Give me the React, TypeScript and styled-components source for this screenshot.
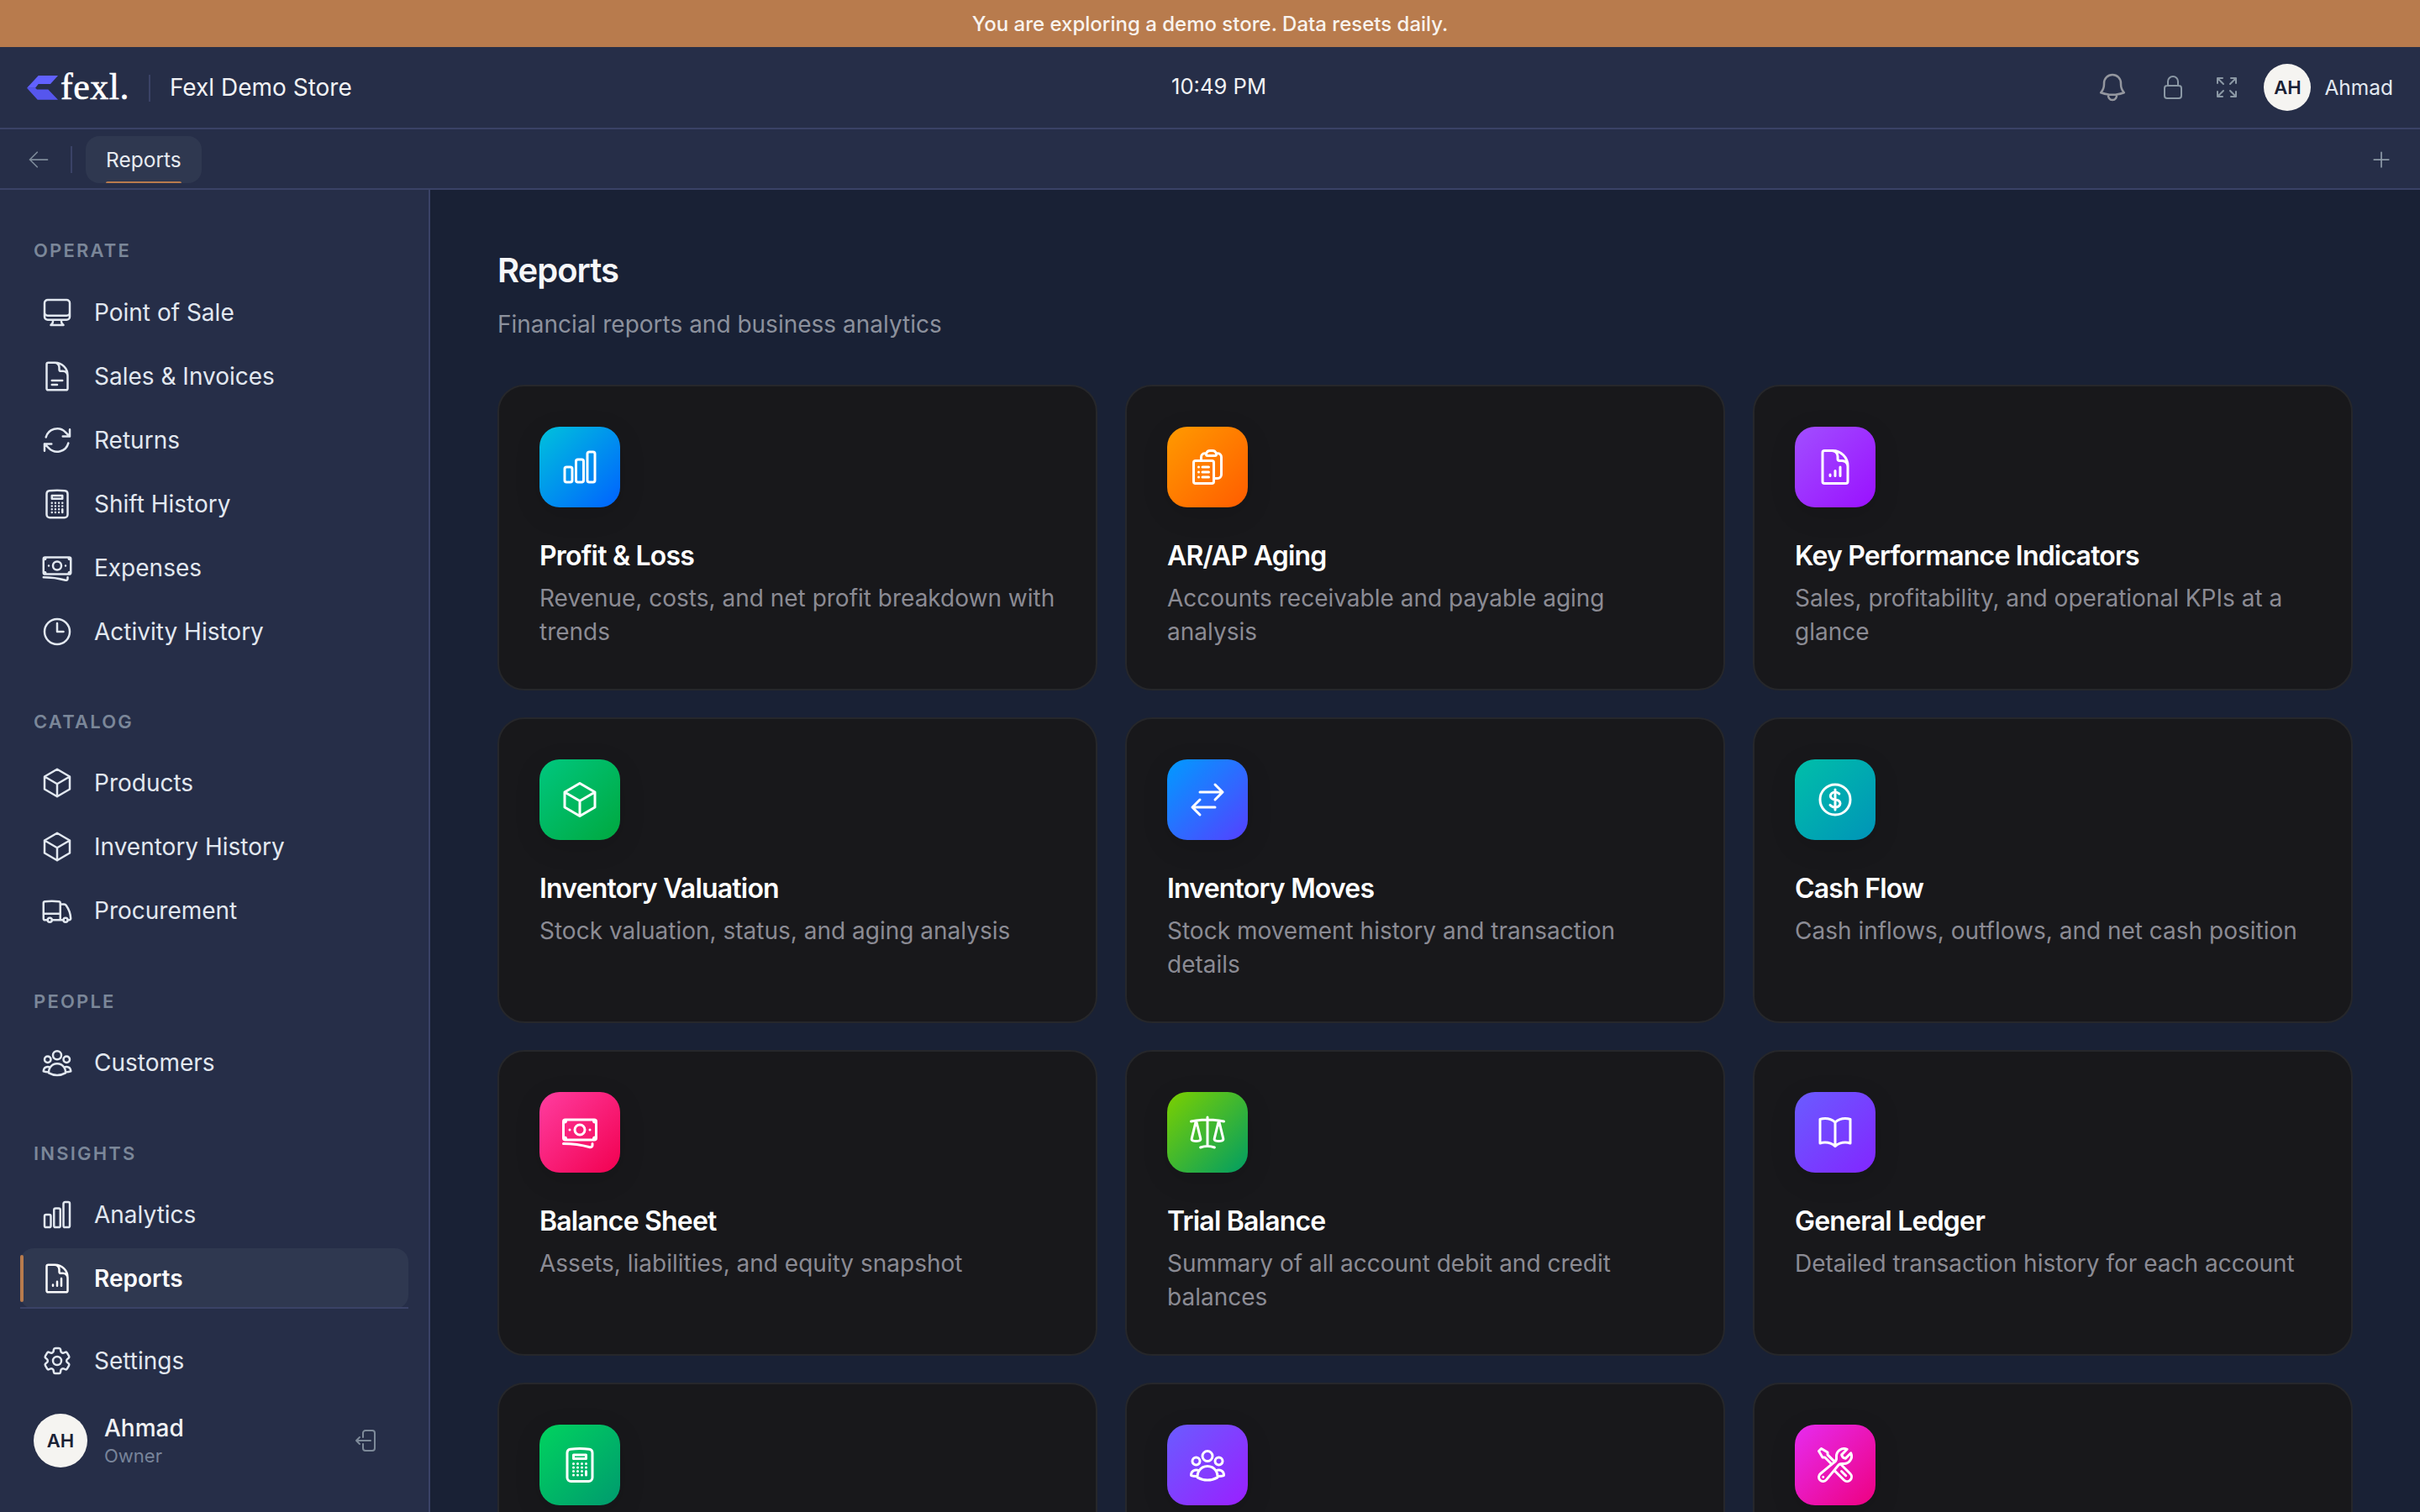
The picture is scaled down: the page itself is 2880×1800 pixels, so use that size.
import React from "react";
import styled, { createGlobalStyle } from "styled-components";
import {
  HiOutlineArrowLeft,
  HiOutlineArrowPath,
  HiOutlineArrowsPointingOut,
  HiOutlineArrowsRightLeft,
  HiOutlineBanknotes,
  HiOutlineBell,
  HiOutlineBookOpen,
  HiOutlineCalculator,
  HiOutlineChartBar,
  HiOutlineClipboardDocumentList,
  HiOutlineClock,
  HiOutlineCog6Tooth,
  HiOutlineComputerDesktop,
  HiOutlineCube,
  HiOutlineCurrencyDollar,
  HiOutlineDocumentChartBar,
  HiOutlineDocumentText,
  HiOutlineLockClosed,
  HiOutlinePlus,
  HiOutlineScale,
  HiOutlineTruck,
  HiOutlineUserGroup,
  HiOutlineWrenchScrewdriver,
} from "react-icons/hi2";

const Global = createGlobalStyle`
  * { box-sizing: border-box; }
  html, body { margin: 0; padding: 0; height: 100%; background: #192135; }
  body { font-family: Inter, "Liberation Sans", sans-serif; overflow: hidden; }
  #root { height: 100%; }
`;

const Page = styled.div`
  display: flex;
  flex-direction: column;
  width: 2880px;
  height: 1800px;
  overflow: hidden;
`;

const Banner = styled.div`
  height: 56px;
  flex: none;
  display: flex;
  align-items: center;
  justify-content: center;
  background: #b87b4d;
  color: #f8f3ee;
  font-size: 24px;
  font-weight: 500;
`;

const Header = styled.header`
  position: relative;
  height: 98px;
  flex: none;
  display: flex;
  align-items: center;
  padding: 0 32px;
  background: #262e48;
  border-bottom: 2px solid #3a4266;
`;

const Logo = styled.div`
  display: flex;
  align-items: center;
  gap: 3px;
`;

const LogoText = styled.span`
  font-family: "Liberation Serif", serif;
  font-size: 44px;
  line-height: 44px;
  font-weight: 400;
  color: #fff;
  letter-spacing: 0.5px;
  -webkit-text-stroke: 0.6px #fff;
`;

const HeaderDivider = styled.div`
  width: 2px;
  height: 32px;
  margin: 2px 23px 0 23px;
  background: #3a4266;
`;

const StoreName = styled.div`
  color: #f1f2f4;
  font-size: 28px;
  font-weight: 400;
`;

const Clock = styled.div`
  position: absolute;
  left: 1394px;
  top: 31px;
  color: #f1f2f4;
  font-size: 25.6px;
`;

const HeaderRight = styled.div`
  margin-left: auto;
  display: flex;
  align-items: center;
`;

const BellButton = styled.span`
  display: flex;
  color: #94979f;
  margin-right: 36px;
`;

const LockButton = styled.span`
  display: flex;
  color: #8b98a5;
  margin-right: 32px;
`;

const ExpandButton = styled.span`
  display: flex;
  color: #8b98a5;
  margin-right: 28px;
`;

const Avatar = styled.div<{ $size: number }>`
  width: ${(p) => p.$size}px;
  height: ${(p) => p.$size}px;
  flex: none;
  border-radius: 50%;
  display: flex;
  align-items: center;
  justify-content: center;
  background: #f5f4f1;
  color: #1a2135;
  font-size: 22px;
  font-weight: 600;
`;

const HeaderUser = styled.div`
  margin-left: 16px;
  color: #e2e8f0;
  font-size: 24.5px;
`;

const TabBar = styled.div`
  height: 72px;
  flex: none;
  display: flex;
  align-items: center;
  padding: 2px 32px 0;
  background: #262e48;
  border-bottom: 2px solid #3a4266;
`;

const BackButton = styled.span`
  display: flex;
  color: #7d8a99;
`;

const TabDivider = styled.div`
  width: 2px;
  height: 32px;
  margin: 0 16px 0 24px;
  background: #3a4266;
`;

const Tab = styled.div`
  position: relative;
  height: 56px;
  padding: 0 24px;
  display: flex;
  align-items: center;
  border-radius: 16px;
  background: #2f3850;
  color: #e8ebf0;
  font-size: 24.5px;

  &::after {
    content: "";
    position: absolute;
    left: 24px;
    right: 24px;
    bottom: 0;
    height: 2px;
    border-radius: 2px 2px 0 0;
    background: #b87b4d;
  }
`;

const PlusButton = styled.span`
  margin-left: auto;
  display: flex;
  color: #8b98a5;
`;

const Body = styled.div`
  flex: 1;
  min-height: 0;
  display: flex;
`;

const Sidebar = styled.aside`
  width: 512px;
  flex: none;
  display: flex;
  flex-direction: column;
  padding: 0 24px;
  background: #262e48;
  border-right: 2px solid #3a4266;
`;

const Nav = styled.nav`
  flex: 1;
  min-height: 0;
  overflow: hidden;
`;

const GroupLabel = styled.div`
  height: 32px;
  margin-bottom: 17px;
  padding-left: 16px;
  line-height: 32px;
  color: #7b8799;
  font-size: 22px;
  font-weight: 600;
  letter-spacing: 2.2px;
`;

const NavGroup = styled.div`
  padding-top: 56px;
  display: flex;
  flex-direction: column;
  gap: 4px;

  &:first-child {
    margin-bottom: -1px;
  }

  &:first-child ${GroupLabel} {
    margin-bottom: 18px;
  }
`;

const NavItem = styled.div<{ $active?: boolean }>`
  position: relative;
  height: 72px;
  flex: none;
  display: flex;
  align-items: center;
  gap: 24px;
  padding: 0 24px;
  border-radius: 16px;
  color: ${(p) => (p.$active ? "#fbfbfc" : "#e2e8f0")};
  background: ${(p) => (p.$active ? "#2f3850" : "transparent")};
  font-size: 28px;
  font-weight: ${(p) => (p.$active ? 600 : 400)};

  ${(p) =>
    p.$active &&
    `&::before {
      content: "";
      position: absolute;
      left: 0;
      top: 8px;
      bottom: 8px;
      width: 4px;
      border-radius: 2px;
      background: #b87b4d;
    }`}
`;

const SidebarFooter = styled.div`
  flex: none;
  border-top: 2px solid #3a4266;
  padding: 26px 0 52px;
`;

const UserRow = styled.div`
  margin-top: 26px;
  padding-left: 16px;
  display: flex;
  align-items: center;
  gap: 20px;
`;

const UserText = styled.div`
  flex: 1;
  display: flex;
  flex-direction: column;
`;

const UserName = styled.div`
  color: #f1f2f4;
  font-size: 28px;
  line-height: 36px;
  font-weight: 500;
`;

const UserRole = styled.div`
  color: #78849a;
  font-size: 22px;
  line-height: 30px;
`;

const LogoutButton = styled.span`
  display: flex;
  color: #7d8a99;
  margin-right: 33px;
`;

const Main = styled.main`
  flex: 1;
  min-width: 0;
  overflow: hidden;
  padding: 68px 80px 0;
  background: #192135;
`;

const Title = styled.h1`
  margin: 0;
  color: #f6f7f9;
  font-size: 40px;
  line-height: 56px;
  font-weight: 600;
  letter-spacing: -1px;
`;

const Subtitle = styled.p`
  margin: 16px 0 0;
  color: #8c919d;
  font-size: 28px;
  line-height: 40px;
`;

const Grid = styled.div`
  margin-top: 52px;
  display: grid;
  grid-template-columns: repeat(3, 1fr);
  grid-auto-rows: 364px;
  gap: 32px 33px;
`;

const Card = styled.div`
  padding: 48px;
  border: 2px solid #26272b;
  border-radius: 32px;
  background: #18181b;
`;

const IconTile = styled.div<{ $from: string; $to: string }>`
  width: 96px;
  height: 96px;
  display: flex;
  align-items: center;
  justify-content: center;
  border-radius: 24px;
  color: #fff;
  background: linear-gradient(135deg, ${(p) => p.$from}, ${(p) => p.$to});
  box-shadow: 0 8px 32px rgba(0, 0, 0, 0.12);
`;

const CardTitle = styled.h2`
  margin: 36px 0 8px;
  color: #fff;
  font-size: 32px;
  line-height: 44px;
  font-weight: 600;
  letter-spacing: -0.8px;
`;

const CardText = styled.p`
  margin: 0;
  color: #8b8b94;
  font-size: 28px;
  line-height: 40px;
`;

type Ic = React.ComponentType<{ size?: number }>;

const groups: { label: string; items: { icon: Ic; text: string; active?: boolean }[] }[] = [
  {
    label: "OPERATE",
    items: [
      { icon: HiOutlineComputerDesktop, text: "Point of Sale" },
      { icon: HiOutlineDocumentText, text: "Sales & Invoices" },
      { icon: HiOutlineArrowPath, text: "Returns" },
      { icon: HiOutlineCalculator, text: "Shift History" },
      { icon: HiOutlineBanknotes, text: "Expenses" },
      { icon: HiOutlineClock, text: "Activity History" },
    ],
  },
  {
    label: "CATALOG",
    items: [
      { icon: HiOutlineCube, text: "Products" },
      { icon: HiOutlineCube, text: "Inventory History" },
      { icon: HiOutlineTruck, text: "Procurement" },
    ],
  },
  { label: "PEOPLE", items: [{ icon: HiOutlineUserGroup, text: "Customers" }] },
  {
    label: "INSIGHTS",
    items: [
      { icon: HiOutlineChartBar, text: "Analytics" },
      { icon: HiOutlineDocumentChartBar, text: "Reports", active: true },
    ],
  },
];

const cards: { icon: Ic; from: string; to: string; title?: string; text?: string }[] = [
  { icon: HiOutlineChartBar, from: "#00c2dc", to: "#0062ff", title: "Profit & Loss", text: "Revenue, costs, and net profit breakdown with trends" },
  { icon: HiOutlineClipboardDocumentList, from: "#ff9a00", to: "#ff5c00", title: "AR/AP Aging", text: "Accounts receivable and payable aging analysis" },
  { icon: HiOutlineDocumentChartBar, from: "#a14fff", to: "#9a10ff", title: "Key Performance Indicators", text: "Sales, profitability, and operational KPIs at a glance" },
  { icon: HiOutlineCube, from: "#00c77f", to: "#00a83f", title: "Inventory Valuation", text: "Stock valuation, status, and aging analysis" },
  { icon: HiOutlineArrowsRightLeft, from: "#009bff", to: "#5540ff", title: "Inventory Moves", text: "Stock movement history and transaction details" },
  { icon: HiOutlineCurrencyDollar, from: "#00bfa9", to: "#0094b8", title: "Cash Flow", text: "Cash inflows, outflows, and net cash position" },
  { icon: HiOutlineBanknotes, from: "#ff3da0", to: "#f20050", title: "Balance Sheet", text: "Assets, liabilities, and equity snapshot" },
  { icon: HiOutlineScale, from: "#7cd000", to: "#009d63", title: "Trial Balance", text: "Summary of all account debit and credit balances" },
  { icon: HiOutlineBookOpen, from: "#6a5cff", to: "#8226ff", title: "General Ledger", text: "Detailed transaction history for each account" },
  { icon: HiOutlineCalculator, from: "#00d35f", to: "#009a6e" },
  { icon: HiOutlineUserGroup, from: "#6a5cff", to: "#9a1fff" },
  { icon: HiOutlineWrenchScrewdriver, from: "#e62cf0", to: "#ee0080" },
];

const LogoMark = () => (
  <svg width="37" height="29" viewBox="0 0 37 29">
    <path d="M13.7 0H37L28 10H13.7L10 14.7H0Z" fill="#6161ff" />
    <path d="M0 14.7H10L12 16.5H25.3L37 28.7H12.7Z" fill="#5656ee" />
  </svg>
);

const LogoutIcon = () => (
  <svg width="32" height="32" viewBox="0 0 24 24" fill="none" stroke="currentColor" strokeWidth="1.5" strokeLinecap="round" strokeLinejoin="round">
    <path d="M8.25 9V5.25A2.25 2.25 0 0 1 10.5 3h6a2.25 2.25 0 0 1 2.25 2.25v13.5A2.25 2.25 0 0 1 16.5 21h-6a2.25 2.25 0 0 1-2.25-2.25V15m-3 0-3-3m0 0 3-3m-3 3H15" />
  </svg>
);

export default function App() {
  return (
    <Page>
      <Global />
      <Banner>You are exploring a demo store. Data resets daily.</Banner>
      <Header>
        <Logo>
          <LogoMark />
          <LogoText>fexl.</LogoText>
        </Logo>
        <HeaderDivider />
        <StoreName>Fexl Demo Store</StoreName>
        <Clock>10:49 PM</Clock>
        <HeaderRight>
          <BellButton><HiOutlineBell size={40} /></BellButton>
          <LockButton><HiOutlineLockClosed size={32} /></LockButton>
          <ExpandButton><HiOutlineArrowsPointingOut size={32} /></ExpandButton>
          <Avatar $size={56}>AH</Avatar>
          <HeaderUser>Ahmad</HeaderUser>
        </HeaderRight>
      </Header>
      <TabBar>
        <BackButton><HiOutlineArrowLeft size={28} /></BackButton>
        <TabDivider />
        <Tab>Reports</Tab>
        <PlusButton><HiOutlinePlus size={28} /></PlusButton>
      </TabBar>
      <Body>
        <Sidebar>
          <Nav>
            {groups.map((g) => (
              <NavGroup key={g.label}>
                <GroupLabel>{g.label}</GroupLabel>
                {g.items.map((it) => (
                  <NavItem key={it.text} $active={it.active}>
                    <it.icon size={40} />
                    {it.text}
                  </NavItem>
                ))}
              </NavGroup>
            ))}
          </Nav>
          <SidebarFooter>
            <NavItem>
              <HiOutlineCog6Tooth size={40} />
              Settings
            </NavItem>
            <UserRow>
              <Avatar $size={64}>AH</Avatar>
              <UserText>
                <UserName>Ahmad</UserName>
                <UserRole>Owner</UserRole>
              </UserText>
              <LogoutButton><LogoutIcon /></LogoutButton>
            </UserRow>
          </SidebarFooter>
        </Sidebar>
        <Main>
          <Title>Reports</Title>
          <Subtitle>Financial reports and business analytics</Subtitle>
          <Grid>
            {cards.map((c, i) => (
              <Card key={i}>
                <IconTile $from={c.from} $to={c.to}>
                  <c.icon size={48} />
                </IconTile>
                {c.title && <CardTitle>{c.title}</CardTitle>}
                {c.text && <CardText>{c.text}</CardText>}
              </Card>
            ))}
          </Grid>
        </Main>
      </Body>
    </Page>
  );
}
